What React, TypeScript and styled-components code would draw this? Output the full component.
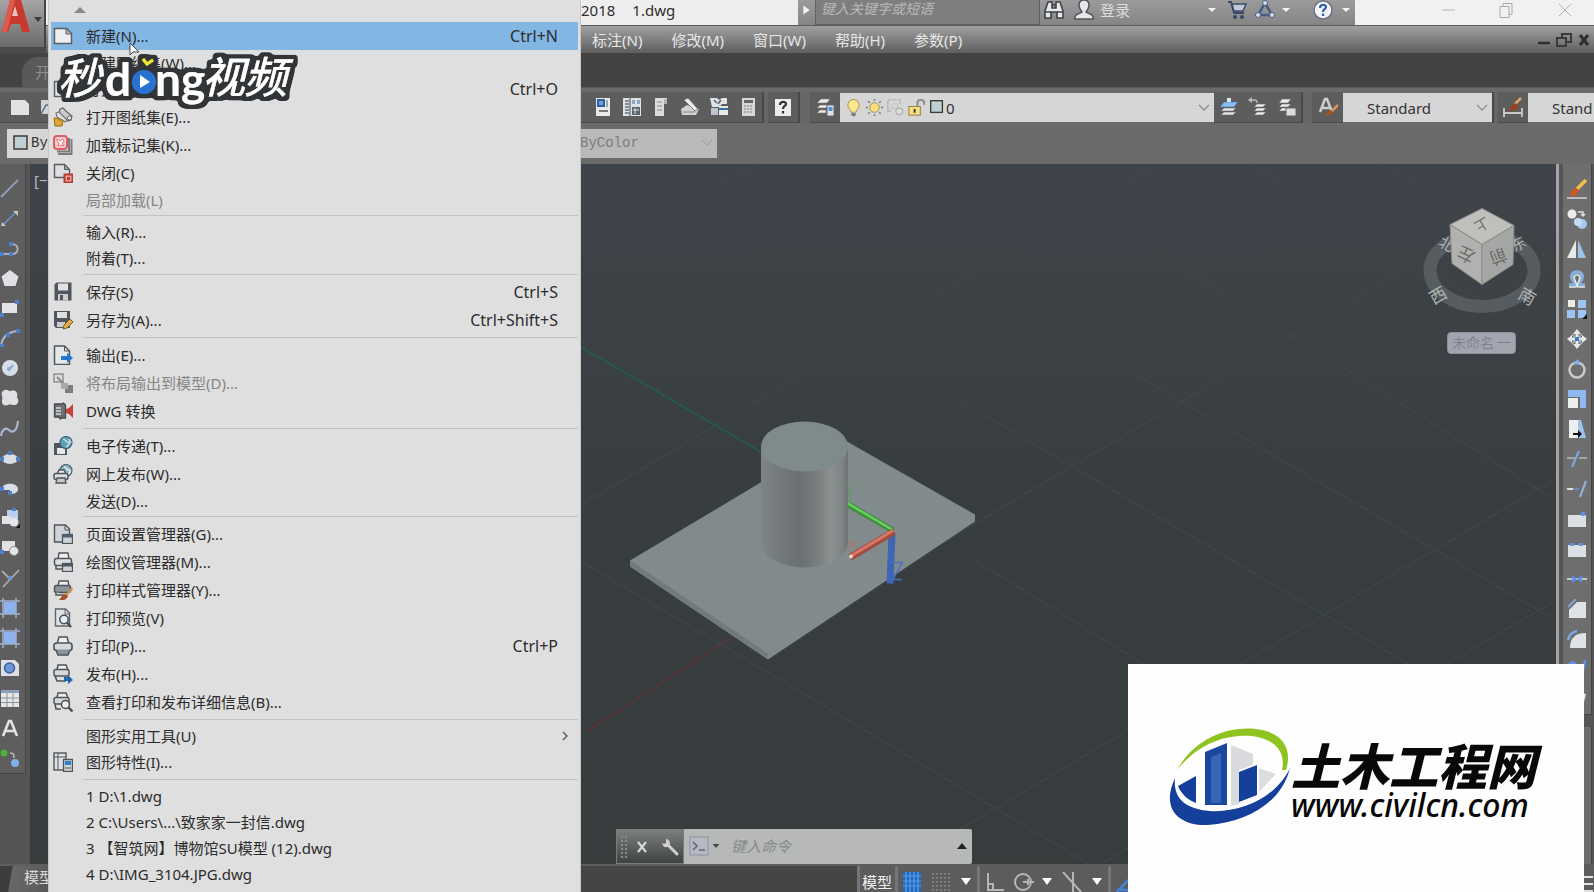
import React from "react";
import styled, { createGlobalStyle } from "styled-components";

const GlobalStyle = createGlobalStyle`
  * { box-sizing: border-box; }
  html, body { margin: 0; height: 100%; overflow: hidden; }
  body {
    font-family: "Noto Sans", "Noto Sans CJK SC", sans-serif;
    font-size: 15px;
    line-height: 20px;
    color: #2e2e2e;
    background: #555;
  }
  button, input, select { font: inherit; color: inherit; margin: 0; padding: 0; border: 0; background: none; }
  ul { list-style: none; margin: 0; padding: 0; }
  svg { display: block; flex: none; }
`;

/* ---------- icons ---------- */

const page = "M1.5 2.5h12l5 5v10h-17z";

const glyphs: Record<string, React.ReactNode> = {
  newPage: (
    <>
      <path d={page} fill="#eceef0" stroke="#5b6066" strokeWidth="1.5" />
      <path d="M13 2.5v5.5h5.5z" fill="#b9bec4" stroke="#5b6066" />
    </>
  ),
  openPage: <path d={page} fill="#e4e6e8" stroke="#5b6066" strokeWidth="1.5" />,
  openSet: (
    <>
      <path d="M7 2l3-1 4 4 5 4-1 4-3 1-4-4-5-4z" fill="#c9cccf" stroke="#666" strokeWidth="1.2" />
      <path d="M3 6l3-1 8 8-2 2-8-5z" fill="#dedfe0" stroke="#777" strokeWidth="1.1" />
      <circle cx="16.500" cy="11" r="2" fill="#eee" stroke="#666" />
      <path d="M1 11h4l1 2h4l-1 6H2z" fill="#e0a637" stroke="#9a6a16" />
    </>
  ),
  markup: (
    <>
      <path d="M18.5 4v15H5M16 3v13.500H4" fill="none" stroke="#7b7b7b" strokeWidth="2" />
      <rect x="1" y="1" width="13" height="13" rx="3" fill="#f3c9cc" stroke="#d9606a" strokeWidth="2" />
      <path d="M4 4l3 2 3-2 1 3-2 1 2 3-3-1-3 1 1-3-2-2z" fill="#fff" stroke="#e27880" />
    </>
  ),
  closePage: (
    <>
      <path d="M1.500 1.500h10l5 5v8h-15z" fill="#dcdfe2" stroke="#555a60" strokeWidth="1.4" />
      <path d="M11.500 1.500v5h5z" fill="#9ba1a7" stroke="#555a60" />
      <rect x="11.500" y="11.500" width="8" height="8" fill="#e7a6a0" stroke="#b93a33" strokeWidth="2" />
      <rect x="14" y="14" width="3" height="3" fill="#b93a33" />
    </>
  ),
  save: (
    <>
      <path d="M1.500 2.500l2-2h15v18h-17z" fill="#50565c" />
      <rect x="5" y="1.500" width="10" height="7" fill="#dfe2e5" />
      <rect x="5" y="12" width="10" height="6.500" fill="#c9cdd1" />
      <rect x="7" y="13" width="3" height="5" fill="#50565c" />
    </>
  ),
  saveAs: (
    <>
      <path d="M1 1h16v17H3l-2-2z" fill="#50565c" />
      <rect x="4" y="2" width="10" height="6" fill="#dfe2e5" />
      <rect x="4" y="12" width="8" height="5" fill="#c9cdd1" />
      <path d="M10 19l1-4 6-6 3 3-6 6z" fill="#e3ac4a" stroke="#7c5a1a" />
    </>
  ),
  exportPage: (
    <>
      <path d="M1.500 1h10l5 5v13.500h-15z" fill="#e5e8ea" stroke="#4e555c" strokeWidth="1.5" />
      <path d="M11.500 1v5h5" fill="none" stroke="#4e555c" />
      <path d="M8 11h6V8l6 5-6 5v-3H8z" fill="#2577c9" />
    </>
  ),
  layout: (
    <>
      <rect x="1" y="1" width="9" height="8" fill="#ddd" stroke="#8b8b8b" strokeWidth="1.400" />
      <rect x="12" y="12" width="8" height="8" fill="#7f7f7f" />
      <path d="M4 4l8 8" stroke="#8b8b8b" strokeWidth="2" />
      <path d="M8 10h7v6H8z" fill="#a9a9a9" />
    </>
  ),
  dwg: (
    <>
      <path d="M1.500 3h7l2-1 2 2v13h-4l-1 1-2-2h-4z" fill="#6d7175" stroke="#474b4f" strokeWidth="1.3" />
      <path d="M3 7h5M3 10h5M3 13h5" stroke="#d5d8da" strokeWidth="1.3" />
      <path d="M20 3v14l-4-4-3-1V8l3-1z" fill="#c93e38" />
    </>
  ),
  eTransmit: (
    <>
      <path d="M1 7h13v12H1z" fill="#50565c" />
      <rect x="4" y="12" width="8" height="6" fill="#e5e8ea" />
      <circle cx="13" cy="6.500" r="6" fill="#5f9fb3" stroke="#3d6473" strokeWidth="1.2" />
      <path d="M10 3c3 0 2 3 5 3s0 4-2 5M16 3l2 4" fill="none" stroke="#b9dce4" strokeWidth="1.6" />
    </>
  ),
  webPublish: (
    <>
      <circle cx="13" cy="6.500" r="6" fill="#8fb3bc" stroke="#4b656d" strokeWidth="1.2" />
      <path d="M11 3c3 0 2 3 5 3s0 4-2 5" fill="none" stroke="#d8eaee" strokeWidth="1.6" />
      <path d="M4 10l2-4h5l2 4" fill="#eee" stroke="#4e5459" strokeWidth="1.4" />
      <rect x="1" y="9.500" width="14" height="6" rx="2" fill="#dcdfe1" stroke="#4e5459" strokeWidth="1.5" />
      <path d="M4 14h8l1 5H3z" fill="#c6cacd" stroke="#4e5459" strokeWidth="1.3" />
    </>
  ),
  pageSetup: (
    <>
      <path d="M1.500 1h11l4 4v13h-15z" fill="#cfd3d7" stroke="#4e555c" strokeWidth="1.4" />
      <path d="M12 1v5h5" fill="none" stroke="#4e555c" />
      <rect x="9.500" y="10.500" width="10" height="9" fill="#cfd3d7" stroke="#4e555c" strokeWidth="1.300" />
      <rect x="9.500" y="10.500" width="10" height="3" fill="#4e6075" />
    </>
  ),
  plotter: (
    <>
      <path d="M5 7l1-6h9l1 6" fill="#eceeef" stroke="#4e5459" strokeWidth="1.4" />
      <rect x="1.500" y="6.500" width="17" height="7" rx="2" fill="#dcdfe1" stroke="#4e5459" strokeWidth="1.5" />
      <path d="M3 13v4h7" fill="none" stroke="#4e5459" strokeWidth="1.5" />
      <rect x="9.500" y="11.500" width="10" height="8" fill="#cfd3d7" stroke="#4e555c" strokeWidth="1.300" />
      <rect x="9.500" y="11.500" width="10" height="3" fill="#4e555c" />
    </>
  ),
  plotStyle: (
    <>
      <path d="M5 6l1-5h9l1 5" fill="#eceeef" stroke="#4e5459" strokeWidth="1.4" />
      <rect x="1.500" y="5.500" width="16" height="7" rx="2" fill="#8a949b" stroke="#4e5459" strokeWidth="1.500" />
      <path d="M3 12v3h8" fill="#ddd" stroke="#4e5459" strokeWidth="1.5" />
      <path d="M19.500 8l-7 8" stroke="#d9904a" strokeWidth="2.200" />
      <path d="M5 20c3 0 3-5 7-6l3 2c-1 4-6 5-10 4z" fill="#a3532a" />
    </>
  ),
  preview: (
    <>
      <path d="M2.500 1h10l4 4v13h-14z" fill="#dfe2e4" stroke="#5e656b" strokeWidth="1.4" />
      <path d="M12 1v5h5" fill="none" stroke="#5e656b" />
      <circle cx="11" cy="11.500" r="4.200" fill="#e8eef1" stroke="#454b51" strokeWidth="1.5" />
      <path d="M14 14.500l4 4.500" stroke="#454b51" strokeWidth="2.300" />
    </>
  ),
  print: (
    <>
      <path d="M4 8l2-7h8l2 7" fill="#eceeef" stroke="#4e5459" strokeWidth="1.500" />
      <rect x="1" y="7" width="18" height="7.500" rx="2.500" fill="#d6d9db" stroke="#4e5459" strokeWidth="1.600" />
      <path d="M3 14l2 5h10l2-5" fill="#8c9297" stroke="#4e5459" strokeWidth="1.500" />
    </>
  ),
  publish: (
    <>
      <path d="M4 6l1-5h8l2 5" fill="#eceeef" stroke="#4e5459" strokeWidth="1.500" />
      <rect x="1" y="5.500" width="15" height="6.500" rx="2" fill="#d6d9db" stroke="#4e5459" strokeWidth="1.500" />
      <path d="M2 12l2 5h9" fill="none" stroke="#4e5459" strokeWidth="1.600" />
      <path d="M11 13h4v-2l5 5-5 4v-3h-4z" fill="#1f66a8" />
    </>
  ),
  plotDetails: (
    <>
      <path d="M4 6l1-5h8l2 5" fill="#eceeef" stroke="#4e5459" strokeWidth="1.500" />
      <rect x="1" y="5.500" width="15" height="6.500" rx="2" fill="#d6d9db" stroke="#4e5459" strokeWidth="1.500" />
      <path d="M2 12l1 5h5" fill="none" stroke="#4e5459" strokeWidth="1.600" />
      <circle cx="12.500" cy="12.500" r="4" fill="#eef1f2" stroke="#454b51" strokeWidth="1.500" />
      <path d="M15.500 15.500l4 4" stroke="#454b51" strokeWidth="2.300" />
    </>
  ),
  props: (
    <>
      <rect x="1" y="1" width="12" height="17" fill="#dfe2e4" stroke="#4e555c" strokeWidth="1.400" />
      <path d="M1 5h12M5 1v17" stroke="#4e555c" />
      <rect x="10.500" y="7.500" width="9" height="12" fill="#cfd3d7" stroke="#4e555c" strokeWidth="1.400" />
      <rect x="12" y="9" width="6" height="4" fill="#2f7ec9" />
      <path d="M12 16h6" stroke="#4e555c" />
    </>
  ),

  /* standard toolbar */
  sheetWhite: <path d="M1 3h14l4 4v11H1z" fill="#e2e2e4" />,
  folder: (
    <>
      <path d="M1 3h8l2 3h8v11H1z" fill="#cfd3d8" />
      <path d="M1 17L6 8h6" fill="none" stroke="#5a6a86" strokeWidth="1.500" />
    </>
  ),
  propPanel: (
    <>
      <rect x="3" y="1" width="14" height="18" fill="#e8eaec" />
      <rect x="4" y="2" width="8" height="8" fill="#2f5f9e" />
      <rect x="6" y="4" width="4" height="4" fill="#6ea2da" />
      <path d="M6 14h9" stroke="#555" strokeWidth="1.500" />
      <path d="M14 3v7" stroke="#9aa" strokeWidth="2" />
    </>
  ),
  designCenter: (
    <>
      <rect x="1" y="1" width="18" height="18" fill="#dfe2e5" />
      <path d="M3 4h4M3 7h4M3 10h4M3 13h4M3 16h4M8 1v18" stroke="#65707c" strokeWidth="1.300" />
      <path d="M10 3h3v4h-3zM15 3h3v4h-3z" fill="#8fa6c0" />
      <rect x="10" y="10" width="8" height="8" fill="#5b6570" />
      <path d="M11 13h6M13 11v6" stroke="#dfe2e5" />
    </>
  ),
  palette: (
    <>
      <path d="M4 1h12v5h-3v13H4z" fill="#dcdcdc" />
      <path d="M6 5h5M6 9h5M6 13h5" stroke="#888" />
      <path d="M13 2h3v5h-3z" fill="#b2b2b2" />
    </>
  ),
  sheetSet: (
    <>
      <path d="M1 12l6-4 12 4-3 6H2z" fill="#cfd3d6" />
      <path d="M4 3l4-2 10 11-3 2z" fill="#eceeef" stroke="#777" />
      <path d="M3 15h12" stroke="#7d858c" />
    </>
  ),
  markupSet: (
    <>
      <path d="M1 1h7l2 2 3-2h5v6h-5l-3 3H3z" fill="#e0e4e8" />
      <path d="M5 3l3 3M12 3l-3 4" stroke="#56606a" strokeWidth="1.500" />
      <rect x="2" y="11" width="7" height="7" fill="#bcc6d0" />
      <rect x="10" y="9" width="9" height="9" fill="#e6e8ea" />
      <path d="M10 12h9" stroke="#3c6ea5" strokeWidth="2" />
    </>
  ),
  calc: (
    <>
      <rect x="4" y="1" width="13" height="18" fill="#d7d7d7" />
      <rect x="6" y="3" width="9" height="3" fill="#666" />
      <path d="M6 9h9M6 12h9M6 15h9" stroke="#9a9a9a" strokeWidth="1.500" strokeDasharray="2 1" />
    </>
  ),
  help: (
    <>
      <rect x="2" y="2" width="16" height="17" fill="#ececec" />
      <path d="M7 8c0-4 6-4 6-1 0 2-3 2-3 5M10 14v2.500" fill="none" stroke="#333" strokeWidth="2.200" />
    </>
  ),
  layers: (
    <>
      <path d="M2 6l4-4h9l-3 4zM2 11l3-3h8l-2 3zM2 16l3-3h6v3z" fill="#ececec" stroke="#777" strokeWidth=".6" />
      <rect x="12" y="8" width="7" height="11" fill="#dce6f2" stroke="#666" />
      <rect x="13.500" y="10" width="4" height="4" fill="#4a90d9" />
    </>
  ),
  bulb: (
    <>
      <path d="M10 1.500a6 6 0 0 1 4 10.500l-1.500 3h-5L6 12a6 6 0 0 1 4-10.500z" fill="#fbe58e" stroke="#9c8d5a" />
      <path d="M7.500 16h5v2l-2 1.500-3-1.500z" fill="#777" />
    </>
  ),
  sun: (
    <>
      <circle cx="10" cy="10" r="5" fill="#fbdf7d" stroke="#9c8d5a" />
      <path d="M10 1v2M10 17v2M1 10h2M17 10h2M3.500 3.500l1.500 1.500M15 15l1.500 1.500M3.500 16.500L5 15M15 5l1.500-1.500" stroke="#777" strokeWidth="1.600" />
    </>
  ),
  vpFreeze: (
    <>
      <path d="M5 14H2V2h13v4" fill="none" stroke="#b4b4b4" strokeWidth="1.500" strokeDasharray="4 1" />
      <path d="M6 6h6v5H6z" fill="none" stroke="#c4c4c4" />
      <circle cx="14" cy="14" r="3.500" fill="#ddd" stroke="#b4b4b4" strokeWidth="1.500" />
    </>
  ),
  unlock: (
    <>
      <path d="M11 9V5c0-4 7-4 7 0v2" fill="none" stroke="#8a8a8a" strokeWidth="2" />
      <rect x="2" y="9" width="12" height="9" fill="#fbdf7d" stroke="#8c7a45" />
      <path d="M8 11.500v4" stroke="#333" strokeWidth="2" />
    </>
  ),
  swatch: <rect x="3" y="3" width="13" height="13" fill="#bfd0d2" stroke="#3a3a3a" strokeWidth="1.500" />,
  layerCurrent: (
    <>
      <path d="M2 18l3-3h12l-3 3zM2 14l3-3h12l-3 3z" fill="#e6e6e6" stroke="#666" strokeWidth=".6" />
      <path d="M1 10l4-5h14l-4 5z" fill="#8dbdf0" stroke="#3b6ea5" strokeWidth=".6" />
      <path d="M8 1h4v4H8z" fill="#d8e6f5" />
    </>
  ),
  layerPrev: (
    <>
      <path d="M6 18l3-3h9l-3 3zM6 14l3-3h9l-3 3zM6 10l3-3h9l-3 3z" fill="#ececec" stroke="#666" strokeWidth=".6" />
      <path d="M1 3h5c3 0 3 1 3 3" fill="none" stroke="#bbb" strokeWidth="1.300" />
      <path d="M0 3l4-3v6z" fill="#bbb" />
    </>
  ),
  layerState: (
    <>
      <path d="M2 6l3-4h9l-3 4zM2 10l3-3h9l-3 3zM2 14l3-3h9l-3 3z" fill="#ececec" stroke="#666" strokeWidth=".6" />
      <rect x="9" y="11" width="10" height="8" fill="#ddd" stroke="#666" />
    </>
  ),
  textStyle: (
    <>
      <path d="M2 15L7 2h2l5 13M4 11h7" fill="none" stroke="#cfcfcf" strokeWidth="2.500" />
      <path d="M20 8l-6 6" stroke="#d99a5b" strokeWidth="2.500" />
      <path d="M6 18c3 0 3-4 7-5l2 2c-1 4-5 4-9 3z" fill="#a5512a" />
    </>
  ),
  dimStyle: (
    <>
      <path d="M1 11v9M19 11v9M1 16h18" stroke="#c8c8c8" strokeWidth="1.800" />
      <path d="M18 1l-7 7" stroke="#e0a36a" strokeWidth="2.500" />
      <path d="M4 13c3 0 3-5 8-7l4 3c-1 4-7 6-12 4z" fill="#8f4526" />
    </>
  ),

  /* draw toolbar */
  line: <path d="M1 19L18 2" stroke="#8f9fb8" strokeWidth="1.800" />,
  ray: (
    <>
      <path d="M3 17L17 3" stroke="#6b93cf" strokeWidth="1.500" />
      <path d="M13 3h5v5zM2 14l4 4H1z" fill="#c9c7b8" />
    </>
  ),
  pline: (
    <>
      <path d="M1 16h11c8 0 7-10 0-10" fill="none" stroke="#a9b0bb" strokeWidth="2" />
      <path d="M0 14h4v4H0zM9 14h4v4H9zM9 4h4v4H9z" fill="#4d7fcc" />
    </>
  ),
  polygon: <path d="M10 2l8.500 6.500-3 9.500h-11l-3-9.500z" fill="#dfe0e3" />,
  rect: (
    <>
      <rect x="2" y="5" width="15" height="10" fill="#e3e4e8" />
      <path d="M15 2h4v4h-4zM0 15h4v4H0z" fill="#4d7fcc" />
    </>
  ),
  arc: (
    <>
      <path d="M1 18C2 9 8 4 18 3" fill="none" stroke="#a9b8cf" strokeWidth="2" />
      <path d="M0 16h4v3H0zM6 5h4v4H6zM16 1h4v4h-4z" fill="#4d7fcc" />
    </>
  ),
  circle: (
    <>
      <circle cx="10" cy="10" r="8" fill="#d9dde5" />
      <path d="M9 12l4-5" stroke="#7f9fd2" strokeWidth="2" />
      <circle cx="9" cy="11" r="2" fill="#8aa9dc" />
    </>
  ),
  cloud: <path d="M3 3c3-3 6 0 7 0s5-2 7 2c1 3-1 3 1 6 1 4-1 6-4 6s-3-1-6 0-6 0-6-3 1-3 0-6 0-4 1-5z" fill="#dddfe2" />,
  spline: <path d="M1 18c1-7 5-9 8-6s8 2 9-9" fill="none" stroke="#a9b8cf" strokeWidth="2.200" />,
  ellipse: (
    <>
      <ellipse cx="10" cy="11" rx="8" ry="5" fill="#d9dde5" />
      <path d="M8 3h4v4H8zM0 9h4v4H0zM16 9h4v4h-4z" fill="#4d7fcc" />
    </>
  ),
  ellipseArc: (
    <>
      <path d="M3 12c-3-8 15-8 15-1 0 4-4 5-8 5v-4z" fill="#d9dde5" />
      <path d="M0 9h4v4H0zM8 13h4v4H8z" fill="#4d7fcc" />
    </>
  ),
  insertBlock: (
    <>
      <rect x="7" y="2" width="11" height="9" fill="#b9cdec" />
      <rect x="2" y="8" width="9" height="8" fill="#dfe1e5" />
      <circle cx="14" cy="14" r="4.500" fill="#e4e6ea" />
      <path d="M16 20h4v-4z" fill="#111" />
      <path d="M12 0h4v3h-4z" fill="#4d7fcc" />
    </>
  ),
  makeBlock: (
    <>
      <rect x="2" y="3" width="13" height="10" fill="#dfe1e5" />
      <circle cx="14" cy="13" r="4.500" fill="#e4e6ea" stroke="#888" />
      <path d="M0 12h4v4H0z" fill="#4d7fcc" />
    </>
  ),
  point: (
    <>
      <path d="M2 3l8 8M19 2L3 19" fill="none" stroke="#a9adb3" strokeWidth="1.800" />
      <path d="M8 8h4v4H8z" fill="#6f93cc" />
    </>
  ),
  hatch: (
    <>
      <rect x="4" y="4" width="12" height="12" fill="#8db2ee" />
      <path d="M3 0v20M16 0v20M0 3h20M0 16h20" stroke="#9fb1d0" strokeWidth="1.500" />
    </>
  ),
  region: (
    <>
      <path d="M1 2h14l4 4v12H1z" fill="#dcdfe3" />
      <circle cx="9.500" cy="10" r="5" fill="#6f97d6" stroke="#3d5f98" strokeWidth="1.500" />
    </>
  ),
  table: (
    <>
      <rect x="1" y="2" width="18" height="17" fill="#e6e7e9" />
      <rect x="1" y="2" width="18" height="3" fill="#8ba0bd" />
      <path d="M7 5v14M13 5v14M1 10h18M1 14.500h18" stroke="#8d9197" />
    </>
  ),
  mtext: <path d="M3 18L9 3h2l6 15M5 13h10" fill="none" stroke="#e3e3e3" strokeWidth="2.600" />,
  addSel: (
    <>
      <circle cx="4" cy="5" r="3.500" fill="#4fae3c" />
      <path d="M10 5c4 0 4 2 4 5" fill="none" stroke="#bbb" strokeWidth="1.500" />
      <circle cx="15" cy="15" r="4" fill="#7fb0ea" />
    </>
  ),

  /* modify toolbar */
  erase: (
    <>
      <path d="M19 1l-9 9" stroke="#f0c04a" strokeWidth="3.500" />
      <path d="M3 17l2-6 5-2 2 3-4 5z" fill="#cf5a1f" />
      <path d="M0 19h20" stroke="#d6d6d6" strokeWidth="1.500" />
    </>
  ),
  copy: (
    <>
      <circle cx="5" cy="5" r="4.500" fill="#ececec" />
      <path d="M11 3h5v4M14 5l2 2 2-2" fill="none" stroke="#ddd" strokeWidth="1.500" />
      <circle cx="15" cy="15" r="5" fill="#a9c8ee" />
      <circle cx="11" cy="13" r="4" fill="#c5dbf5" />
    </>
  ),
  mirror: (
    <>
      <path d="M9 1v18H0z" fill="#e6e8ea" />
      <path d="M11 1v18h8z" fill="#9cc3ea" />
    </>
  ),
  offset: (
    <>
      <path d="M2 16h4c3 0 2-2 0-5-3-5 0-8 4-8s7 3 4 8c-2 3-3 5 0 5h4" fill="none" stroke="#86aede" strokeWidth="3.500" />
      <path d="M2 18h6c2 0 2-2 1-4-3-6-2-8 1-8s4 2 1 8c-1 2-1 4 1 4h6" fill="none" stroke="#e4e6e8" strokeWidth="1.600" />
    </>
  ),
  array: (
    <>
      <rect x="1" y="1" width="7" height="7" fill="#ecece4" />
      <rect x="11" y="1" width="8" height="8" fill="#9ec4f4" />
      <rect x="0" y="11" width="8" height="8" fill="#9ec4f4" />
      <rect x="11" y="11" width="8" height="8" fill="#9ec4f4" />
      <path d="M15 20h5v-5z" fill="#111" />
    </>
  ),
  move: (
    <>
      <path d="M10 0l4 5H6zM10 20l4-5H6zM0 10l5-4v8zM20 10l-5-4v8z" fill="#e6e8ea" />
      <path d="M5 5l10 10M15 5L5 15" stroke="#a9b3bf" strokeWidth="1.500" />
      <path d="M10 4v12M4 10h12" stroke="#e6e8ea" strokeWidth="3" />
      <rect x="8" y="8" width="4" height="4" fill="#3d79c4" />
    </>
  ),
  rotate: (
    <>
      <circle cx="10" cy="11" r="7.500" fill="none" stroke="#c9c9c9" strokeWidth="2.500" />
      <path d="M6 5l5-5 2 6z" fill="#7fb0f0" />
    </>
  ),
  scale: (
    <>
      <path d="M1 1h18v18h-6V8H1z" fill="#8fb9ee" />
      <rect x="1" y="9" width="10" height="10" fill="#eceef0" />
    </>
  ),
  stretch: (
    <>
      <path d="M2 1h9v18H2z" fill="#eceef0" />
      <path d="M11 1h3l5 18h-8z" fill="#9cc3f0" />
      <path d="M6 14h5v-3l4 4-4 4v-3H6z" fill="#111" />
    </>
  ),
  trim: (
    <>
      <path d="M0 9h8M12 9h8" stroke="#a3a9a6" strokeWidth="1.800" />
      <path d="M12 2L5 18" stroke="#7ea6dc" strokeWidth="2.200" />
    </>
  ),
  extend: (
    <>
      <path d="M0 10h6" stroke="#ddd" strokeWidth="2" />
      <path d="M6 10h6" stroke="#6a94cf" strokeWidth="1.500" />
      <path d="M19 2l-6 16" stroke="#8fb1de" strokeWidth="2.200" />
    </>
  ),
  breakPoint: (
    <>
      <rect x="1" y="6" width="18" height="12" fill="#dcdfe3" />
      <path d="M14 3h4v4h-4z" fill="#5f92e8" />
    </>
  ),
  breakLine: (
    <>
      <rect x="1" y="6" width="18" height="12" fill="#dcdfe3" />
      <path d="M3 4h4v3H3zM12 4h4v3h-4z" fill="#5f92e8" />
    </>
  ),
  join: (
    <>
      <path d="M0 10h20" stroke="#c5c9cf" strokeWidth="2" />
      <path d="M5 6l5 4-5 4zM15 6l-5 4 5 4z" fill="#5f92e8" />
    </>
  ),
  chamfer: (
    <>
      <path d="M2 11l8-8h9v16H2z" fill="#dfe2e6" />
      <path d="M1 8l8-8" stroke="#7ea6dc" strokeWidth="2" />
    </>
  ),
  fillet: (
    <>
      <path d="M3 19c0-9 4-15 16-15v15z" fill="#dfe2e6" />
      <path d="M1 11c1-5 4-8 9-9" fill="none" stroke="#7ea6dc" strokeWidth="2.500" />
    </>
  ),
  blend: <path d="M2 6c3-4 5-3 7 0M18 1l-1 8-5 7" fill="none" stroke="#5f92e8" strokeWidth="2.500" />,
  explode: <path d="M5 15l8-12 6 2-2 8-8 6z" fill="#dde8f5" />,
  square: <rect x="2" y="7" width="8" height="7" fill="#e6e6e6" />,

  /* info center */
  binoculars: (
    <>
      <path d="M4 2h4v6h4V2h4l3 9v7h-6v-6H7v6H1v-7z" fill="#e8e8e8" stroke="#3d434c" strokeWidth="1.600" />
      <path d="M1 12h6M13 12h6M8 5h4" stroke="#3d434c" strokeWidth="1.500" />
    </>
  ),
  user: (
    <path d="M10 0c5 0 6 4 4 9l-2 3 6 3 2 4H0l2-4 6-3-2-3C4 4 5 0 10 0z" fill="#e6e8ea" stroke="#50555c" strokeWidth="1.500" />
  ),
  cart: (
    <>
      <path d="M1 2h3l3 11h10" fill="none" stroke="#38476a" strokeWidth="1.800" />
      <path d="M5 4h14l-3 7H7z" fill="#c2c9d6" stroke="#38476a" strokeWidth="1.400" />
      <circle cx="8" cy="17" r="2" fill="#38476a" />
      <circle cx="15" cy="17" r="2" fill="#38476a" />
    </>
  ),
  a360: (
    <>
      <path d="M10 3l7 12H3z" fill="none" stroke="#475d86" strokeWidth="2.500" />
      <circle cx="10" cy="3" r="2.500" fill="#d8dfea" stroke="#475d86" />
      <circle cx="3" cy="15" r="2.500" fill="#d8dfea" stroke="#475d86" />
      <circle cx="17" cy="15" r="2.500" fill="#d8dfea" stroke="#475d86" />
    </>
  ),
  helpRound: (
    <>
      <circle cx="10" cy="10" r="9" fill="#f4f6f9" stroke="#6c7482" strokeWidth="1.500" />
      <path d="M7 8c0-4 6-4 6-1 0 2-3 2-3 5M10 13.500v2.500" fill="none" stroke="#2f5fae" strokeWidth="2.200" />
    </>
  ),
  down: <path d="M6 8h8l-4 4z" fill="#f2f2f2" />,
  downBig: <path d="M5 6h10l-5 7z" fill="#fff" />,
  downDark: <path d="M5 7h10l-5 6z" fill="#4a4a4a" />,
  upDark: <path d="M5 13h10l-5-6z" fill="#222" />,
  upGrey: <path d="M4 13h12l-6-6z" fill="#888" />,
  play: <path d="M6 5l7 5-7 5z" fill="#f4f4f4" />,
  chevron: <path d="M5 7l5 5 5-5" fill="none" stroke="#8f8f8f" strokeWidth="1.300" />,
  chevronFaint: <path d="M5 7l5 5 5-5" fill="none" stroke="#9d9d9d" />,
  chevronRight: <path d="M8 6l4 4-4 4" fill="none" stroke="#555" strokeWidth="1.300" />,

  /* window controls */
  min: <path d="M3 10h13" stroke="#b5b5b5" />,
  restore: <path d="M3 6.500h9v11H3zM6 6V3.500h9v11h-3" fill="none" stroke="#a9a9a9" />,
  close: <path d="M4 4l12 12M16 4L4 16" stroke="#b0b0b0" />,
  minDark: <path d="M4 13h12" stroke="#2f2f2f" strokeWidth="2.500" />,
  restoreDark: <path d="M3 8h9v8H3zM8 8V4h9v8h-5" fill="none" stroke="#3a3a3a" strokeWidth="2" />,
  closeDark: <path d="M6 5l8 10M14 5L6 15" stroke="#2f2f2f" strokeWidth="3" />,

  /* command line and status bar */
  closeLight: <path d="M6 5l8 10M14 5L6 15" stroke="#d6d6d6" strokeWidth="2.200" />,
  wrench: (
    <>
      <path d="M8 8l9 9" stroke="#cfcfcf" strokeWidth="3" strokeLinecap="round" />
      <path d="M2 6c1 6 8 5 8 0 0-2-2-4-4-4v4L4 7z" fill="#cfcfcf" />
    </>
  ),
  prompt: (
    <>
      <rect x="1" y="1" width="18" height="18" fill="#b4b9c4" stroke="#8e939c" />
      <path d="M4 6l4 4-4 4M10 14h6" fill="none" stroke="#5b6374" strokeWidth="1.500" />
    </>
  ),
  gridBlue: (
    <>
      <rect x="1" y="0" width="18" height="20" fill="#2568bd" />
      <path d="M4 0v20M8 0v20M12 0v20M16 0v20" stroke="#4f97ea" strokeWidth="1.500" />
      <path d="M1 4h18M1 9h18M1 14h18" stroke="#4f97ea" />
    </>
  ),
  gridDots: <path d="M3 1v19M7 1v19M11 1v19M15 1v19M19 1v19" stroke="#9a9a9a" strokeWidth="1.500" strokeDasharray="1.500 2.500" />,
  ortho: <path d="M3 1v17h16M3 12h5v6" fill="none" stroke="#b5b5b5" strokeWidth="2" />,
  polar: (
    <>
      <circle cx="9" cy="10" r="8" fill="none" stroke="#b5b5b5" strokeWidth="2" />
      <path d="M9 10h11M14 7v6" stroke="#b5b5b5" strokeWidth="2" />
    </>
  ),
  iso: <path d="M1 0l18 20M11 0v20" stroke="#b5b5b5" strokeWidth="2" />,
  osnap: <path d="M2 20L18 3M2 18h18" stroke="#3f86de" strokeWidth="2.500" />,
  burger: <path d="M2 5h17M2 12h17M2 19h17" stroke="#e2e2e2" strokeWidth="2" />,
};

const Icon = ({ name, size = 20 }: { name: string; size?: number }) => (
  <svg width={size} height={size} viewBox="0 0 20 20" aria-hidden="true">
    {glyphs[name]}
  </svg>
);

/* ---------- frame ---------- */

const Shell = styled.div`
  position: relative;
  display: flex;
  flex-direction: column;
  height: 100vh;
  overflow: hidden;
`;

const Header = styled.header`
  display: grid;
  grid-template: 26px 27px / 46px minmax(0, 1fr);
`;

const AppButton = styled.button`
  grid-row: 1 / 3;
  display: flex;
  align-items: flex-start;
  background: linear-gradient(#a6a6a6, #6b6b6b);
  border-right: 2px solid #444;
  border-bottom: 6px solid #4a4a4a;
`;

const TitleRow = styled.div`
  display: flex;
  min-width: 0;
  border-bottom: 1px solid #5c5c5c;
`;

const DocTitle = styled.div`
  flex: 0 0 752px;
  display: flex;
  gap: 17px;
  padding-left: 535px;
  background: #eee;
`;

const InfoCenter = styled.div`
  flex: 1;
  display: flex;
  align-items: center;
  padding-bottom: 5px;
  min-width: 0;
  background: linear-gradient(#9b9b9b, #858585);
`;

const SearchInput = styled.input`
  width: 225px;
  height: 25px;
  margin-bottom: -5px;
  padding: 0 5px 7px;
  font-size: 14px;
  font-style: italic;
  background: #7e7e7e;
  border: 1px solid #606060;
  border-top: 0;
  &::placeholder { color: #b9b9b9; opacity: 1; }
`;

const IconButton = styled.button<{ $w?: number }>`
  flex: none;
  display: flex;
  align-items: center;
  justify-content: center;
  width: ${(p) => p.$w ?? 28}px;
`;

const Login = styled.button`
  margin-right: auto;
  color: #dcdcdc;
`;

const Divider = styled.span`
  width: 14px;
`;

const WindowControls = styled.div`
  flex: 0 0 239px;
  display: flex;
  justify-content: flex-end;
  align-items: center;
  padding-bottom: 6px;
  background: #f1f1f1;
`;

const MenuBar = styled.nav`
  display: flex;
  align-items: center;
  padding: 0 0 0 532px;
  background: linear-gradient(#a0a0a0, #5f5f5f);
`;

const MenuBarItem = styled.button`
  padding: 0 15px 0 14px;
  color: #e6e6e6;
`;

const DocControls = styled.div`
  display: flex;
  margin-left: auto;
`;

const TabStrip = styled.div`
  flex: 0 0 34px;
  padding: 4px 0 0 22px;
  background: #434343;
  border-bottom: 1px solid #5a5a5a;
`;

const FileTab = styled.button`
  width: 120px;
  height: 30px;
  padding-left: 13px;
  text-align: left;
  color: #8d8d8d;
  background: #595959;
  border-radius: 16px 0 0 0;
`;

const ToolRow = styled.div<{ $h: number; $low?: number }>`
  flex: 0 0 ${(p) => p.$h}px;
  display: flex;
  align-items: center;
  padding-bottom: ${(p) => p.$low ?? 0}px;
  background: #6a6a6a;
`;

const ToolGroup = styled.div<{ $w?: number; $pad?: number }>`
  flex: none;
  display: flex;
  align-items: center;
  height: 31px;
  width: ${(p) => (p.$w ? `${p.$w}px` : "auto")};
  padding-left: ${(p) => p.$pad ?? 0}px;
  background: #5d5d5d;
  border-bottom: 1px solid #4b4b4b;
`;

const Grip = styled.span<{ $w: number }>`
  flex: none;
  width: ${(p) => p.$w}px;
  height: 31px;
  background: #666;
  border-left: 2px solid #484848;
`;

const Gap = styled.span<{ $w: number }>`
  flex: none;
  width: ${(p) => p.$w}px;
`;

const Combo = styled.label<{ $w?: number; $pad?: number; $dim?: boolean }>`
  flex: ${(p) => (p.$w ? `0 0 ${p.$w}px` : "1 1 0")};
  display: flex;
  align-items: center;
  height: 29px;
  min-width: 0;
  padding-left: ${(p) => p.$pad ?? 5}px;
  overflow: hidden;
  background: ${(p) => (p.$dim ? "#b9b9b9" : "#d6d6d6")};
  color: ${(p) => (p.$dim ? "#7c7c7c" : "#333")};
`;

const Select = styled.select<{ $mono?: boolean }>`
  flex: 1;
  min-width: 0;
  appearance: none;
  outline: 0;
  font-family: ${(p) => (p.$mono ? '"Liberation Mono", monospace' : "inherit")};
  font-size: ${(p) => (p.$mono ? 14 : 15)}px;
`;

const LayerState = styled.span`
  display: flex;
  gap: 2px;
`;

/* ---------- work area ---------- */

const Workspace = styled.main`
  flex: 1;
  display: flex;
  min-height: 0;
`;

const SideBar = styled.aside<{ $w: number; $pad: number; $line?: boolean }>`
  flex: 0 0 ${(p) => p.$w}px;
  display: flex;
  flex-direction: column;
  gap: 12px;
  padding-left: ${(p) => p.$pad}px;
  background: #555;
  border-left: ${(p) => (p.$line ? "3px solid #a2a4a5" : "0")};
`;

const SideTools = styled.div<{ $w: number; $tone: string; $pad: string }>`
  display: flex;
  flex-direction: column;
  align-items: center;
  width: ${(p) => p.$w}px;
  padding: ${(p) => p.$pad};
  background: ${(p) => p.$tone};
  border-right: 1px solid #444;
  border-bottom: 1px solid #444;
`;

const SideButton = styled.button`
  flex: none;
  display: flex;
  align-items: center;
  height: 30px;
`;

const Canvas = styled.section`
  position: relative;
  flex: 1;
  min-width: 0;
  background: linear-gradient(#3e4449, #383e40 45%, #373d3d);
  overflow: hidden;
`;

const Scene = styled.svg`
  position: absolute;
  inset: 0;
  width: 100%;
  height: 100%;
`;

const ViewLabel = styled.p`
  position: absolute;
  top: 6px;
  left: 4px;
  margin: 0;
  color: #b9bcbf;
`;

const UcsButton = styled.button`
  position: absolute;
  top: 168px;
  right: 40px;
  width: 69px;
  height: 22px;
  padding-bottom: 2px;
  font: 14px/18px "Noto Sans CJK SC", sans-serif;
  font-weight: 300;
  color: #757985;
  background: #a2a5af;
  border: 1px solid #8c8f98;
  border-radius: 4px;
`;

const CommandLine = styled.form`
  position: absolute;
  left: 586px;
  bottom: 0;
  display: flex;
  width: 356px;
  height: 35px;
`;

const CommandHandle = styled.div`
  display: flex;
  align-items: center;
  gap: 1px;
  width: 68px;
  padding-left: 3px;
  background: linear-gradient(#7d7f7f, #3f4242);
  border: 1px solid #7a7c7c;
`;

const Dots = styled.span`
  width: 7px;
  height: 24px;
  background: radial-gradient(circle, #8a8a8a 1px, transparent 1px) 0 0 / 4px 4px;
`;

const CommandField = styled.label`
  flex: 1;
  display: flex;
  align-items: center;
  padding: 0 0 2px 5px;
  background: #b7b9b9;
  border-radius: 0 2px 2px 0;
`;

const CommandInput = styled.input`
  flex: 1;
  min-width: 0;
  margin-left: 8px;
  font-style: italic;
  outline: 0;
  &::placeholder { color: #868989; opacity: 1; }
`;

/* ---------- status bar ---------- */

const StatusBar = styled.footer`
  flex: 0 0 28px;
  display: flex;
  background: #454545;
  border-top: 2px solid #5d5f5f;
`;

const LayoutTab = styled.button`
  width: 857px;
  padding: 0 0 4px 24px;
  text-align: left;
  color: #d8d8d8;
  background: linear-gradient(100deg, #3d3d3d 12px, #686868 13px, #555 60px, #454545 61px);
`;

const StatusGroup = styled.div<{ $w?: number }>`
  display: flex;
  align-items: flex-end;
  flex: ${(p) => (p.$w ? `0 0 ${p.$w}px` : "1")};
  background: #5c5c5c;
  border-left: 3px solid #757575;
`;

const ModelButton = styled.button`
  padding-left: 2px;
  white-space: nowrap;
  color: #f0f0f0;
`;

const Push = styled.span`
  margin-left: auto;
`;

/* ---------- file menu ---------- */

const FileMenu = styled.div`
  position: absolute;
  z-index: 2;
  top: 0;
  left: 48px;
  width: 533px;
  height: 100%;
  overflow: hidden;
  background: #dfdfdf;
  border: solid #c8c8c8;
  border-width: 0 1px;
`;

const ScrollUp = styled.button`
  display: flex;
  width: 100%;
  height: 22px;
  padding: 0 0 2px 21px;
  align-items: center;
`;

const MenuItem = styled.button<{ $h: number; $active?: boolean; $off?: boolean }>`
  display: grid;
  grid-template-columns: 33px 1fr auto;
  align-items: center;
  width: calc(100% - 4px);
  height: ${(p) => p.$h}px;
  margin-left: 2px;
  padding: 0 20px 0 2px;
  text-align: left;
  white-space: nowrap;
  color: ${(p) => (p.$off ? "#858585" : "#2c2c2c")};
  background: ${(p) => (p.$active ? "#82b6e3" : "transparent")};
`;

const Shortcut = styled.span`
  font-size: 16px;
`;

const SubArrow = styled.span`
  margin-right: -17px;
`;

const Rule = styled.hr`
  height: 1px;
  margin: 3px 2px 3px 34px;
  border: 0;
  background: #c3c3c3;
`;

/* ---------- overlays ---------- */

const Watermark = styled.svg`
  position: absolute;
  z-index: 3;
  top: 48px;
  left: 46px;
`;

const Pointer = styled.svg`
  position: absolute;
  z-index: 4;
  top: 42px;
  left: 129px;
`;

const LogoCard = styled.a`
  position: absolute;
  z-index: 3;
  right: 10px;
  bottom: 0;
  display: flex;
  align-items: center;
  width: 456px;
  height: 228px;
  padding: 0 0 0 40px;
  color: #080808;
  text-decoration: none;
  background: #fefefe;
`;

const LogoText = styled.span`
  display: flex;
  flex-direction: column;
  margin-top: 6px;
`;

const LogoName = styled.strong`
  font: italic 900 49px/48px "Noto Sans CJK SC", sans-serif;
`;

const LogoUrl = styled.span`
  font: italic 500 32px/34px "Noto Sans", sans-serif;
`;

/* ---------- data ---------- */

type Entry =
  | "-"
  | { label: string; icon?: string; keys?: string; off?: boolean; active?: boolean; sub?: boolean; h?: number };

const entries: Entry[] = [
  { label: "新建(N)...", icon: "newPage", keys: "Ctrl+N", active: true },
  { label: "新建图纸集(W)..." },
  { label: "打开(O)...", icon: "openPage", keys: "Ctrl+O" },
  { label: "打开图纸集(E)...", icon: "openSet" },
  { label: "加载标记集(K)...", icon: "markup" },
  { label: "关闭(C)", icon: "closePage" },
  { label: "局部加载(L)", off: true },
  "-",
  { label: "输入(R)...", h: 26 },
  { label: "附着(T)...", h: 26 },
  "-",
  { label: "保存(S)", icon: "save", keys: "Ctrl+S" },
  { label: "另存为(A)...", icon: "saveAs", keys: "Ctrl+Shift+S" },
  "-",
  { label: "输出(E)...", icon: "exportPage" },
  { label: "将布局输出到模型(D)...", icon: "layout", off: true },
  { label: "DWG 转换", icon: "dwg" },
  "-",
  { label: "电子传递(T)...", icon: "eTransmit" },
  { label: "网上发布(W)...", icon: "webPublish" },
  { label: "发送(D)..." },
  "-",
  { label: "页面设置管理器(G)...", icon: "pageSetup" },
  { label: "绘图仪管理器(M)...", icon: "plotter" },
  { label: "打印样式管理器(Y)...", icon: "plotStyle" },
  { label: "打印预览(V)", icon: "preview" },
  { label: "打印(P)...", icon: "print", keys: "Ctrl+P" },
  { label: "发布(H)...", icon: "publish" },
  { label: "查看打印和发布详细信息(B)...", icon: "plotDetails" },
  "-",
  { label: "图形实用工具(U)", sub: true },
  { label: "图形特性(I)...", icon: "props" },
  "-",
  { label: "1 D:\\1.dwg", h: 26 },
  { label: "2 C:\\Users\\...\\致家家一封信.dwg", h: 26 },
  { label: "3 【智筑网】博物馆SU模型 (12).dwg", h: 26 },
  { label: "4 D:\\IMG_3104.JPG.dwg", h: 26 },
  { label: "5 D:\\智筑网\\国际经典住宅模型.dwg", h: 26 },
];

const drawTools = [
  "line", "ray", "pline", "polygon", "rect", "arc", "circle", "cloud", "spline", "ellipse",
  "ellipseArc", "insertBlock", "makeBlock", "point", "hatch", "hatch", "region", "table", "mtext", "addSel",
];

const modifyTools = [
  "erase", "copy", "mirror", "offset", "array", "move", "rotate", "scale", "stretch",
  "trim", "extend", "breakPoint", "breakLine", "join", "chamfer", "fillet", "blend", "explode",
];

const menus = ["标注(N)", "修改(M)", "窗口(W)", "帮助(H)", "参数(P)"];

const Tools = ({ names, w }: { names: string[]; w: number }) => (
  <>
    {names.map((n) => (
      <IconButton key={n} $w={w} aria-label={n}>
        <Icon name={n} />
      </IconButton>
    ))}
  </>
);

const SideList = ({ names }: { names: string[] }) => (
  <>
    {names.map((n, i) => (
      <SideButton key={i} aria-label={n}>
        <Icon name={n} />
      </SideButton>
    ))}
  </>
);

/* ---------- drawings ---------- */

const ModelScene = () => (
  <Scene viewBox="30 163 1526 701" preserveAspectRatio="xMidYMid slice">
    <defs>
      <linearGradient id="side">
        <stop offset="0" stopColor="#7f8586" />
        <stop offset=".2" stopColor="#757a7b" />
        <stop offset=".45" stopColor="#6a6f71" />
        <stop offset=".62" stopColor="#767b7c" />
        <stop offset=".8" stopColor="#8b9191" />
        <stop offset=".93" stopColor="#7f8585" />
        <stop offset="1" stopColor="#6c7273" />
      </linearGradient>
    </defs>
    <g stroke="#42494c" strokeWidth="1" fill="none">
      <path d="M580 505L1160 163M760 650L1556 180M900 864L1556 478M580 560L1090 864M975 560L1470 864M960 400L1556 750M1060 330L1556 620M1140 240L1556 500M1250 163L1556 345M1380 163L1556 262M1100 864L1556 600M580 250L760 163" />
    </g>
    <path d="M580 346L762 452" stroke="#235c49" strokeWidth="1.500" />
    <path d="M587 731L730 638" stroke="#5a3439" strokeWidth="1.500" />
    <path d="M630 560L838 436L847 441L975 514V521L768 659L630 566z" fill="#818b8b" />
    <path d="M630 560L768 653V659L630 566z" fill="#727a7c" />
    <path d="M761 447V541a43.500 26 0 0 0 87 0V447z" fill="url(#side)" />
    <ellipse cx="804.500" cy="446" rx="43.500" ry="25" fill="#7f8b8a" />
    <path d="M848 504L893 530" stroke="#3f8f3d" strokeWidth="6" />
    <path d="M848 503L892 529" stroke="#66cf5f" strokeWidth="2.500" />
    <path d="M892 534L890 583" stroke="#3f66b5" strokeWidth="7" />
    <path d="M891 562h11l-9 17h9" fill="none" stroke="#4a6fc0" strokeWidth="1.500" />
    <path d="M850 557L894 531" stroke="#a34d40" strokeWidth="7" />
    <path d="M850 556L893 530" stroke="#d87868" strokeWidth="3" />
    <circle cx="851" cy="556" r="2" fill="#f0d0c8" />
    <path d="M848 540l9 7M856 540l-9 9" stroke="#c9635a" />
    <path d="M850 501v-11l-4-5M850 490l7-7" fill="none" stroke="#4da34a" />
    <g fill="#b0b4b2" fontFamily="Noto Sans CJK SC" fontSize="17" textAnchor="middle">
      <ellipse cx="1482" cy="270" rx="52" ry="36" fill="none" stroke="#565c60" strokeWidth="13" />
      <text x="1447" y="249" transform="rotate(30 1447 243)" fontSize="15">北</text>
      <text x="1518" y="249" transform="rotate(-30 1518 243)" fontSize="15">东</text>
      <text x="1438" y="301" transform="rotate(-30 1438 295)">西</text>
      <text x="1527" y="302" transform="rotate(30 1527 296)">南</text>
    </g>
    <path d="M1482 208L1514 225L1482 244L1450 224z" fill="#bfbfbb" stroke="#8a8c8a" />
    <path d="M1450 224L1482 244V284L1452 263z" fill="#b1b2af" stroke="#8a8c8a" />
    <path d="M1514 225L1482 244V284L1513 264z" fill="#a5a7a5" stroke="#8a8c8a" />
    <g fill="#666a68" fontFamily="Noto Sans CJK SC" fontSize="17" textAnchor="middle">
      <text x="1482" y="229" transform="rotate(150 1482 224)" fontSize="14">上</text>
      <text x="1466" y="260" transform="rotate(205 1466 254)">左</text>
      <text x="1498" y="262" transform="rotate(160 1498 256)">前</text>
    </g>
  </Scene>
);

const VideoMark = () => (
  <Watermark width="256" height="66" viewBox="46 48 256 66" role="img" aria-label="秒dong视频">
    <defs>
      <filter id="outline" filterUnits="userSpaceOnUse" x="46" y="48" width="256" height="66">
        <feMorphology in="SourceAlpha" operator="dilate" radius="4" result="grown" />
        <feGaussianBlur in="grown" stdDeviation="1.500" result="soft" />
        <feComponentTransfer in="soft" result="round">
          <feFuncA type="linear" slope="5" intercept="-1.500" />
        </feComponentTransfer>
        <feFlood floodColor="#333639" />
        <feComposite in2="round" operator="in" result="edge" />
        <feMerge>
          <feMergeNode in="edge" />
          <feMergeNode in="SourceGraphic" />
        </feMerge>
      </filter>
    </defs>
    <g filter="url(#outline)" fill="#fff" fontFamily="Noto Sans CJK SC" fontStyle="italic" fontWeight="500" fontSize="43">
      <text x="58" y="94">秒</text>
      <text x="105" y="96" fontFamily="Lato" fontStyle="normal" fontWeight="700" fontSize="46">d</text>
      <circle cx="144" cy="82" r="12" fill="#2b72d0" />
      <text x="155" y="96" fontFamily="Lato" fontStyle="normal" fontWeight="700" fontSize="46">ng</text>
      <text x="202" y="93">视</text>
      <text x="244" y="93">频</text>
      <path d="M143 59l4 5 6-4" fill="none" stroke="#f3e534" strokeWidth="3" />
    </g>
    <path d="M140 75l10 7-10 6z" fill="#fff" />
  </Watermark>
);

const CivilLogo = () => (
  <svg width="123" height="104" viewBox="1168 726 123 104" aria-hidden="true">
    <path d="M1177 770C1195 738 1228 726 1256 729C1282 732 1293 748 1286 770L1282 770C1286 752 1275 739 1252 736C1225 734 1198 744 1177 770z" fill="#8fc31f" />
    <path d="M1175 778C1160 810 1180 826 1208 825C1248 822 1282 802 1290 768C1276 798 1240 813 1210 811C1184 809 1173 797 1175 778z" fill="#143f9a" />
    <path d="M1231 745l22 9v11l-14 5v34l-8 2z" fill="#d9dadd" />
    <path d="M1259 768l17 6-17 18z" fill="#dcdde0" />
    <path d="M1178 786l18-10v27c-8-3-15-9-18-17z" fill="#143f9a" />
    <path d="M1205 752l22-9v62h-22z" fill="#1b479f" />
    <path d="M1211 757l10-4v50h-10z" fill="#3766b4" />
    <path d="M1239 772l18-7v30l-18 7z" fill="#143f9a" />
  </svg>
);

/* ---------- page ---------- */

export default function App() {
  return (
    <>
      <GlobalStyle />
      <Shell>
        <Header>
          <AppButton aria-label="应用程序">
            <svg width="44" height="36" viewBox="0 0 44 36">
              <path d="M2 32L10 0h11l9 32h-8l-2-8h-9l-3 8z" fill="#c8392f" />
              <path d="M2 32L10 0h5L7 32z" fill="#e0594b" />
              <path d="M15 6l3 10h-6z" fill="#e9c4bd" />
              <path d="M34 17h8l-4 5z" fill="#3a3a3a" />
            </svg>
          </AppButton>
          <TitleRow>
            <DocTitle>
              <span>2018</span>
              <span>1.dwg</span>
            </DocTitle>
            <InfoCenter>
              <IconButton $w={17} aria-label="展开"><Icon name="play" size={18} /></IconButton>
              <SearchInput aria-label="搜索" placeholder="键入关键字或短语" />
              <IconButton aria-label="查找"><Icon name="binoculars" /></IconButton>
              <IconButton $w={32} aria-label="用户"><Icon name="user" /></IconButton>
              <Login>登录</Login>
              <IconButton $w={18} aria-label="登录选项"><Icon name="down" /></IconButton>
              <IconButton $w={32} aria-label="应用商店"><Icon name="cart" /></IconButton>
              <IconButton $w={24} aria-label="A360"><Icon name="a360" /></IconButton>
              <IconButton $w={18} aria-label="A360 选项"><Icon name="down" /></IconButton>
              <Divider />
              <IconButton aria-label="帮助"><Icon name="helpRound" /></IconButton>
              <IconButton $w={18} aria-label="帮助选项"><Icon name="down" /></IconButton>
            </InfoCenter>
            <WindowControls>
              <IconButton $w={58} aria-label="最小化"><Icon name="min" /></IconButton>
              <IconButton $w={58} aria-label="还原"><Icon name="restore" /></IconButton>
              <IconButton $w={58} aria-label="关闭"><Icon name="close" /></IconButton>
            </WindowControls>
          </TitleRow>
          <MenuBar>
            {menus.map((m) => (
              <MenuBarItem key={m}>{m}</MenuBarItem>
            ))}
            <DocControls>
              <Tools names={["minDark", "restoreDark", "closeDark"]} w={20} />
            </DocControls>
          </MenuBar>
        </Header>

        <TabStrip>
          <FileTab>开始</FileTab>
        </TabStrip>

        <ToolRow $h={39}>
          <ToolGroup $w={588} $pad={5}>
            <Tools names={["sheetWhite", "folder"]} w={30} />
          </ToolGroup>
          <ToolGroup>
            <Tools names={["propPanel", "designCenter", "palette", "sheetSet", "markupSet", "calc"]} w={29} />
            <Grip $w={6} />
            <Tools names={["help"]} w={30} />
          </ToolGroup>
          <Grip $w={12} />
          <ToolGroup>
            <Tools names={["layers"]} w={30} />
          </ToolGroup>
          <Combo $pad={4}>
            <LayerState>
              {["bulb", "sun", "vpFreeze", "unlock"].map((n) => (
                <Icon key={n} name={n} size={19} />
              ))}
              <Icon name="swatch" size={18} />
            </LayerState>
            <Select aria-label="图层" defaultValue="0">
              <option>0</option>
            </Select>
            <Icon name="chevron" />
          </Combo>
          <ToolGroup>
            <Tools names={["layerCurrent", "layerPrev", "layerState"]} w={29} />
          </ToolGroup>
          <Grip $w={11} />
          <ToolGroup>
            <Tools names={["textStyle"]} w={31} />
          </ToolGroup>
          <Combo $w={149} $pad={24}>
            <Select aria-label="文字样式"><option>Standard</option></Select>
            <Icon name="chevron" />
          </Combo>
          <Grip $w={6} />
          <ToolGroup>
            <Tools names={["dimStyle"]} w={30} />
          </ToolGroup>
          <Combo $w={66} $pad={24}>
            <Select aria-label="标注样式"><option>Stand</option></Select>
          </Combo>
        </ToolRow>

        <ToolRow $h={37} $low={5}>
          <Gap $w={7} />
          <Combo $w={540} $pad={4}>
            <Icon name="swatch" />
            <Select $mono aria-label="颜色"><option>ByLayer</option></Select>
          </Combo>
          <Gap $w={13} />
          <Combo $w={157} $pad={20} $dim>
            <Select $mono aria-label="打印样式"><option>ByColor</option></Select>
            <Icon name="chevronFaint" />
          </Combo>
        </ToolRow>

        <Workspace>
          <SideBar $w={30} $pad={0}>
            <SideTools $w={26} $tone="#5e5e5e" $pad="9px 5px 0 0">
              <SideList names={drawTools} />
            </SideTools>
          </SideBar>
          <Canvas>
            <ModelScene />
            <ViewLabel>[−]</ViewLabel>
            <UcsButton>未命名 一</UcsButton>
            <CommandLine>
              <CommandHandle>
                <Dots />
                <IconButton type="button" $w={27} aria-label="关闭命令行"><Icon name="closeLight" /></IconButton>
                <IconButton type="button" $w={27} aria-label="自定义"><Icon name="wrench" /></IconButton>
              </CommandHandle>
              <CommandField>
                <Icon name="prompt" />
                <Icon name="downDark" size={14} />
                <CommandInput aria-label="命令" placeholder="键入命令" />
                <Icon name="upDark" />
              </CommandField>
            </CommandLine>
          </Canvas>
          <SideBar $w={38} $pad={4} $line>
            <SideTools $w={29} $tone="#6e6e6e" $pad="10px 0 0 0">
              <SideList names={modifyTools} />
            </SideTools>
            <SideTools $w={29} $tone="#6e6e6e" $pad="5px 0 30px 14px">
              <SideList names={["square", "square", "square", "square"]} />
            </SideTools>
          </SideBar>
        </Workspace>

        <StatusBar>
          <LayoutTab>模型</LayoutTab>
          <StatusGroup $w={38}>
            <ModelButton>模型</ModelButton>
          </StatusGroup>
          <StatusGroup $w={82}>
            <Tools names={["gridBlue", "gridDots"]} w={28} />
            <Tools names={["downBig"]} w={23} />
          </StatusGroup>
          <StatusGroup $w={131}>
            <Tools names={["ortho", "polar"]} w={29} />
            <IconButton $w={18} aria-label="极轴选项"><Icon name="downBig" /></IconButton>
            <IconButton $w={32} aria-label="等轴测"><Icon name="iso" /></IconButton>
            <IconButton $w={18} aria-label="等轴测选项"><Icon name="downBig" /></IconButton>
          </StatusGroup>
          <StatusGroup>
            <Tools names={["osnap"]} w={28} />
            <Push><Icon name="burger" /></Push>
          </StatusGroup>
        </StatusBar>

        <FileMenu role="menu" aria-label="文件">
          <ScrollUp aria-label="向上滚动"><Icon name="upGrey" /></ScrollUp>
          {entries.map((e, i) =>
            e === "-" ? (
              <Rule key={i} />
            ) : (
              <MenuItem
                key={i}
                role="menuitem"
                $h={e.h ?? (e.icon ? 28 : 25)}
                $active={e.active}
                $off={e.off}
              >
                <span>{e.icon && <Icon name={e.icon} />}</span>
                <span>{e.label}</span>
                {e.keys && <Shortcut>{e.keys}</Shortcut>}
                {e.sub && <SubArrow><Icon name="chevronRight" /></SubArrow>}
              </MenuItem>
            ),
          )}
        </FileMenu>

        <VideoMark />
        <Pointer width="12" height="16" viewBox="0 0 12 16" aria-hidden="true">
          <path d="M1 1v12l3-3h6z" fill="#fff" stroke="#444" />
        </Pointer>

        <LogoCard href="#civilcn">
          <CivilLogo />
          <LogoText>
            <LogoName>土木工程网</LogoName>
            <LogoUrl>www.civilcn.com</LogoUrl>
          </LogoText>
        </LogoCard>
      </Shell>
    </>
  );
}
